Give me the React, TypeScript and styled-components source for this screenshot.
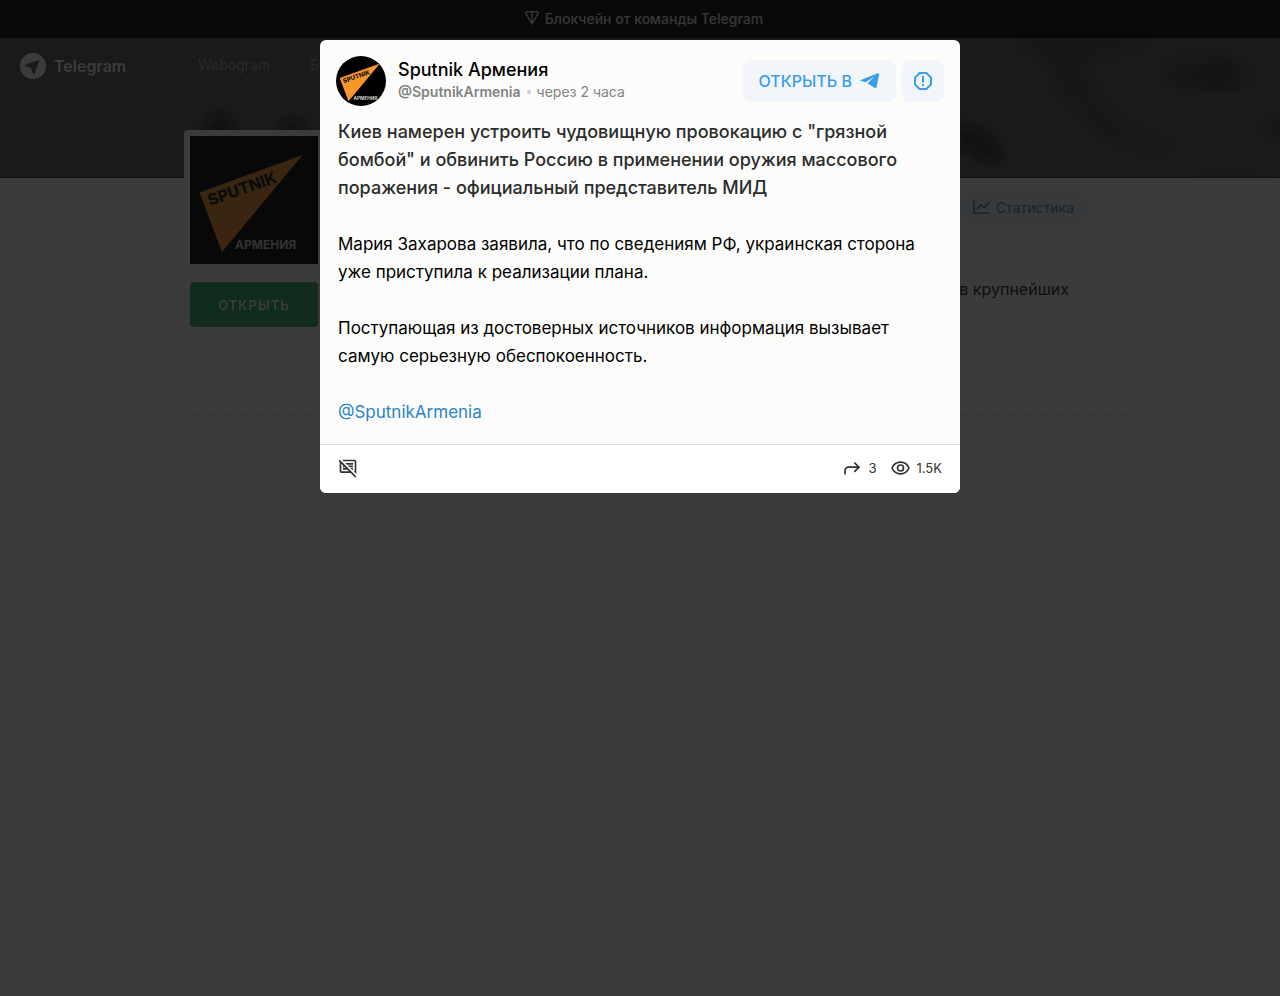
import React from "react";
import styled, { createGlobalStyle } from "styled-components";
import { MdOutlineCommentsDisabled } from "react-icons/md";

const GlobalStyle = createGlobalStyle`
  *, *::before, *::after { box-sizing: border-box; }
  body {
    margin: 0;
    background: #fff;
    color: #000;
    font-family: Inter, Roboto, "Liberation Sans", sans-serif;
    font-size: 16px;
  }
  a { color: inherit; text-decoration: none; }
  button { font-family: inherit; border: 0; cursor: pointer; }
  h1, p { margin: 0; }
  svg { display: block; flex: none; }
`;

const Page = styled.div`
  min-height: 100vh;
`;

const Promo = styled.a`
  display: flex;
  align-items: center;
  justify-content: center;
  gap: 6px;
  height: 38px;
  padding: 0 0 2px 8px;
  background: #000;
  && { color: #e8e8e8; }
  font-size: 14px;
  font-weight: 500;
`;

const Cover = styled.header`
  position: relative;
  height: 140px;
  overflow: hidden;
  background: #606060;
  border-bottom: 1px solid #2d2d2d;
`;

const CoverArt = styled.svg`
  position: absolute;
  inset: 0;
  width: 100%;
  height: 100%;
`;

const NavBar = styled.nav`
  position: relative;
  display: flex;
  align-items: center;
  height: 55px;
  padding: 0 20px 2px;
  background: rgba(0, 0, 0, 0.05);
`;

const Brand = styled.a`
  display: flex;
  align-items: center;
  gap: 8px;
  width: 178px;
  padding-top: 2px;
  && { color: #fff; }
  font-weight: 600;
  font-size: 16px;
`;

const NavLink = styled.a`
  margin-right: 40px;
  && { color: #aaa; }
  font-size: 14px;
`;

const Profile = styled.main`
  display: flex;
  align-items: flex-start;
  gap: 24px;
  max-width: 980px;
  margin: 0 auto;
  padding-left: 34px;
`;

const Side = styled.div`
  position: relative;
  flex: none;
  width: 140px;
  margin: -48px 0 0;
`;

const ProfilePhoto = styled.a`
  display: block;
  padding: 6px;
  border-radius: 4px;
  background: #fff;
`;

const JoinButton = styled.button`
  display: block;
  width: 128px;
  height: 45px;
  margin: 12px 6px 0;
  border-radius: 4px;
  background: #2daf64;
  color: #fff;
  font-size: 13px;
  font-weight: 600;
  letter-spacing: 1px;
`;

const Info = styled.div`
  flex: 1;
  display: flex;
  flex-direction: column;
  align-items: flex-end;
  padding: 13px 40px 0 0;
`;

const StatsLink = styled.a`
  display: flex;
  align-items: center;
  gap: 6px;
  height: 34px;
  padding: 0 15px 2px 14px;
  border: 1px solid #e4ecf4;
  border-radius: 17px;
  background: #ecf3fa;
  && { color: #5f7fa8; }
  font-size: 14px;
`;

const About = styled.p`
  margin: 51px 21px 0 0;
  font-size: 16px;
  line-height: 26px;
  color: #222;
`;

const Divider = styled.div`
  max-width: 980px;
  margin: 85px auto 0;
  padding-left: 40px;
`;

const Overlay = styled.div`
  position: fixed;
  inset: 0;
  display: flex;
  align-items: flex-start;
  justify-content: center;
  padding: 40px 0;
  overflow: auto;
  background: rgba(10, 10, 10, 0.8);
`;

const Dialog = styled.article`
  width: 100%;
  max-width: 640px;
  border-radius: 6px;
  overflow: hidden;
  background: #fcfdfb;
`;

const PostHeader = styled.div`
  display: flex;
  align-items: center;
  padding: 16px 16px 12px;
`;

const Avatar = styled.a`
  flex: none;
  border-radius: 50%;
  overflow: hidden;
`;

const Author = styled.div`
  flex: 1;
  padding: 0 0 2px 12px;
`;

const AuthorName = styled.h1`
  font-size: 18px;
  line-height: 24px;
  font-weight: 500;
`;

const Meta = styled.div`
  display: flex;
  align-items: center;
  gap: 6px;
  font-size: 14px;
  line-height: 20px;
  color: #828282;
`;

const Handle = styled.a`
  font-weight: 600;
`;

const Dot = styled.span`
  width: 4px;
  height: 4px;
  border-radius: 50%;
  background: #ccc;
`;

const Actions = styled.div`
  display: flex;
  gap: 6px;
`;

const ActionButton = styled.button<{ $square?: boolean }>`
  display: flex;
  align-items: center;
  justify-content: center;
  gap: 8px;
  height: 42px;
  padding: ${(p) => (p.$square ? "0 11px" : "0 16px")};
  border-radius: 8px;
  background: #f2f6fb;
  color: #3a9dea;
  font-size: 16px;
  font-weight: 500;
`;

const PostBody = styled.div`
  padding: 0 28px 18px 18px;
  font-size: 17px;
  line-height: 28px;
`;

const Paragraph = styled.p<{ $lead?: boolean }>`
  margin-bottom: 28px;
  color: ${(p) => (p.$lead ? "#2c2c2c" : "#000")};
  font-size: ${(p) => (p.$lead ? "18px" : "17px")};
  font-weight: ${(p) => (p.$lead ? 500 : 400)};
`;

const Mention = styled.a`
  && { color: #2a84cb; }
`;

const PostFooter = styled.footer`
  display: flex;
  align-items: center;
  gap: 14px;
  height: 49px;
  padding: 0 18px 2px;
  border-top: 1px solid #dcdfe6;
  background: #fff;
  color: #333;
`;

const Counter = styled.span<{ $push?: boolean }>`
  display: flex;
  align-items: center;
  gap: 6px;
  margin-left: ${(p) => (p.$push ? "auto" : "0")};
  font-size: 13px;
`;

function Logo({ size }: { size: number }) {
  return (
    <svg width={size} height={size} viewBox="0 0 128 128" role="img" aria-label="Sputnik Армения">
      <rect width="128" height="128" fill="#000" />
      <path d="M9.500 56.500 112.500 19 32 116Z" fill="#fa9628" />
      <text x="20" y="70" transform="rotate(-19.500 20 70)" fontSize="16" fontWeight="800" fill="#111">SPUTNIK</text>
      <text x="45" y="113" fontSize="12" fontWeight="700" fill="#d0d0d0">АРМЕНИЯ</text>
    </svg>
  );
}

function Zigzag() {
  return (
    <svg width="100%" height="8" aria-hidden="true">
      <defs>
        <pattern id="zig" width="16" height="8" patternUnits="userSpaceOnUse">
          <path d="M-1 6.500 0 6 8 1.500 16 6 17 6.500" fill="none" stroke="#e6e6e6" strokeWidth="1.500" />
        </pattern>
      </defs>
      <rect width="100%" height="8" fill="url(#zig)" />
    </svg>
  );
}

export default function App() {
  return (
    <>
      <GlobalStyle />
      <Page>
        <Promo href="#ton">
          <svg width="14" height="14" viewBox="0 0 14 14" fill="none" stroke="currentColor" strokeWidth="1.500" strokeLinejoin="round">
            <path d="M2 .8h10c1 0 1.500 1 1 1.800L7 13 1 2.600C.5 1.800 1 .8 2 .8ZM7 1v12" />
          </svg>
          Блокчейн от команды Telegram
        </Promo>
        <Cover>
          <CoverArt viewBox="0 0 1280 140" preserveAspectRatio="xMidYMid slice" aria-hidden="true">
            <defs>
              <filter id="soft" x="-50%" y="-50%" width="200%" height="200%"><feGaussianBlur stdDeviation="8" /></filter>
            </defs>
            <g filter="url(#soft)" fill="#101010">
              <ellipse cx="219" cy="92" rx="15" ry="14" opacity=".8" />
              <ellipse cx="293" cy="93" rx="12" ry="13" opacity=".75" />
              <path d="M955 88c25 0 45 17 48 34-18 8-25-12-48-16Z" opacity=".8" />
              <ellipse cx="1205" cy="37" rx="38" ry="12" opacity=".3" />
              <ellipse cx="1224" cy="38" rx="15" ry="9" opacity=".5" />
              <path d="M1020 0h140l-80 15v30l40 40 60 25-20 5-60-15-40-50-2-25Z" opacity=".35" />
              <ellipse cx="1276" cy="92" rx="14" ry="12" opacity=".3" />
              <ellipse cx="1230" cy="140" rx="34" ry="5" opacity=".3" />
            </g>
          </CoverArt>
          <NavBar>
            <Brand href="#home">
              <svg width="26" height="26" viewBox="0 0 26 26">
                <circle cx="13" cy="13" r="13" fill="#fff" />
                <path d="M19.600 6.700 14.600 20.800c-.3.700-1.200.7-1.500 0L10.900 15.300 5.200 12.900c-.7-.3-.7-1.200 0-1.500Z" fill="#5c5c5c" />
              </svg>
              Telegram
            </Brand>
            <NavLink href="#webogram">Webogram</NavLink>
            <NavLink href="#blog">Блог</NavLink>
          </NavBar>
        </Cover>
        <Profile>
          <Side>
            <ProfilePhoto href="#channel"><Logo size={128} /></ProfilePhoto>
            <JoinButton type="button">ОТКРЫТЬ</JoinButton>
          </Side>
          <Info>
            <StatsLink href="#stats">
              <svg width="17" height="16" viewBox="0 0 17 16" fill="none" stroke="currentColor" strokeWidth="1.600">
                <path d="M1 1v13.200h15.500M4 10.200 8 6l3 2.800L16 3.500" />
              </svg>
              Статистика
            </StatsLink>
            <About>в крупнейших</About>
          </Info>
        </Profile>
        <Divider><Zigzag /></Divider>
      </Page>
      <Overlay>
        <Dialog role="dialog" aria-modal="true" aria-labelledby="author">
          <PostHeader>
            <Avatar href="#channel"><Logo size={50} /></Avatar>
            <Author>
              <AuthorName id="author">Sputnik Армения</AuthorName>
              <Meta>
                <Handle href="#channel">@SputnikArmenia</Handle>
                <Dot />
                <time>через 2 часа</time>
              </Meta>
            </Author>
            <Actions>
              <ActionButton type="button">
                ОТКРЫТЬ В
                <svg width="20" height="16" viewBox="0 0 20 16" fill="currentColor">
                  <path d="M.8 7 17.800.3c.8-.3 1.500.2 1.300 1.300L16.500 14.400c-.2 1-.9 1.200-1.700.7L7.500 10.200 14.500 3.600 5.500 9.200 1 7.900C.2 7.700.1 7.300.8 7Z" />
                </svg>
              </ActionButton>
              <ActionButton type="button" $square aria-label="Пожаловаться">
                <svg width="20" height="20" viewBox="0 0 20 20" fill="none" stroke="currentColor" strokeWidth="2">
                  <path d="M6.600 2h6.800L18 6.600v6.800L13.400 18H6.600L2 13.400V6.600ZM10 5v6.500M10 13v2" />
                </svg>
              </ActionButton>
            </Actions>
          </PostHeader>
          <PostBody>
            <Paragraph $lead>
              Киев намерен устроить чудовищную провокацию с "грязной бомбой" и обвинить Россию в применении оружия массового поражения - официальный представитель МИД
            </Paragraph>
            <Paragraph>
              Мария Захарова заявила, что по сведениям РФ, украинская сторона уже приступила к реализации плана.
            </Paragraph>
            <Paragraph>
              Поступающая из достоверных источников информация вызывает самую серьезную обеспокоенность.
            </Paragraph>
            <Mention href="#mention">@SputnikArmenia</Mention>
          </PostBody>
          <PostFooter>
            <MdOutlineCommentsDisabled size={20} aria-label="Комментарии отключены" />
            <Counter $push>
              <svg width="18" height="14" viewBox="0 0 18 14" fill="none" stroke="currentColor" strokeWidth="1.700">
                <path d="M1 13.500V9.700A3.500 3.500 0 0 1 4.500 6.200H14.500M10.300 1.500 15 6.200 10.300 10.900" />
              </svg>
              3
            </Counter>
            <Counter>
              <svg width="20" height="14" viewBox="0 0 20 14" fill="none" stroke="currentColor" strokeWidth="1.700">
                <path d="M1 7C2.700 3.200 5.800 1.200 9.500 1.200S16.300 3.200 18 7C16.300 10.800 13.200 12.800 9.500 12.800S2.700 10.800 1 7Z" />
                <circle cx="9.500" cy="7" r="3" />
              </svg>
              1.5K
            </Counter>
          </PostFooter>
        </Dialog>
      </Overlay>
    </>
  );
}
